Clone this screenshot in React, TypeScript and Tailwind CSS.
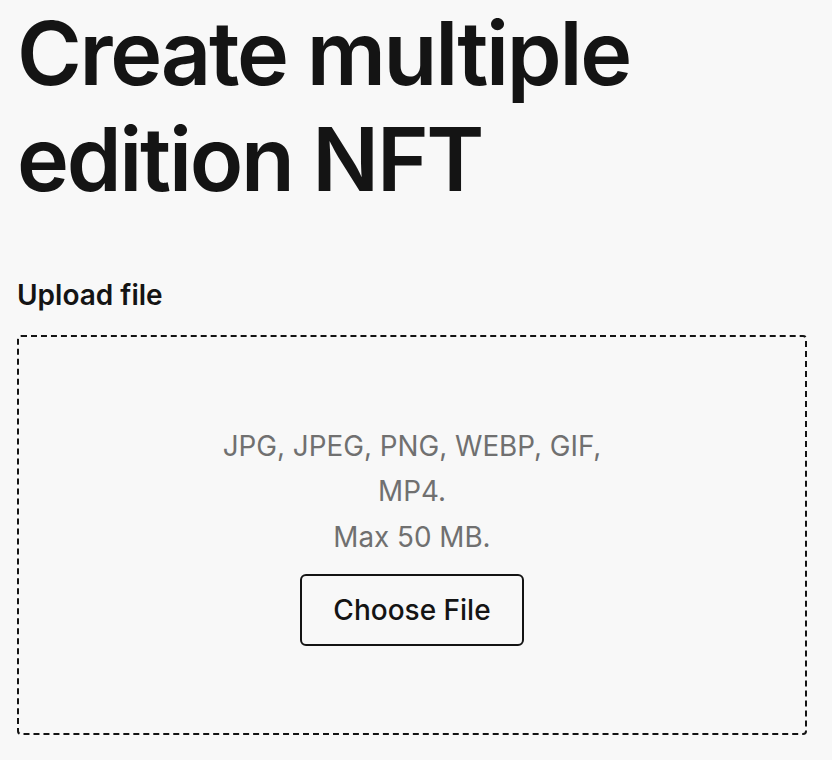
import React from 'react';

const App = () => {
  return (
    <div className="min-h-[760px] bg-[#f8f8f8] text-[#141414] font-['Inter',sans-serif]">
      <div className="pl-[17px] pt-0">
        <h1 className="text-[88px] font-semibold leading-[106px] tracking-[-0.026em] m-0">
          Create multiple
          <br />
          edition NFT
        </h1>

        <div className="mt-[64px]">
          <label className="block text-[28px] font-semibold leading-[39px]">Upload file</label>
          <div className="mt-[20px] w-[790px] h-[400px] border-2 border-dashed border-[#141414] rounded-[4px] flex flex-col items-center justify-center">
            <p className="max-w-[400px] text-center text-[27.8px] leading-[45.5px] text-[#707070]">
              JPG, JPEG, PNG, WEBP, GIF, MP4.
              <br />
              Max 50 MB.
            </p>
            <button
              type="button"
              className="mt-[14px] w-[224px] h-[72px] border-2 border-[#141414] rounded-[6px] text-[28px] font-medium text-[#141414] bg-transparent"
            >
              Choose File
            </button>
          </div>
        </div>
      </div>
    </div>
  );
};

export default App;
